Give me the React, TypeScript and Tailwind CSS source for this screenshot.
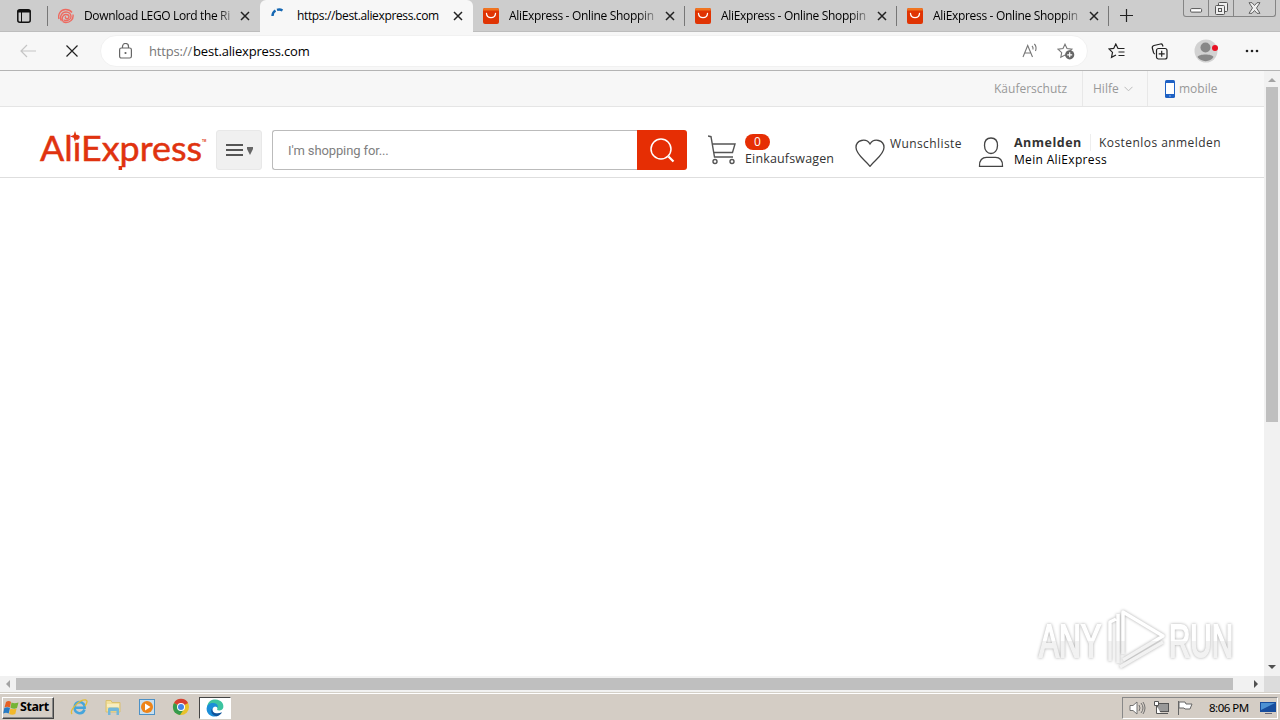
import type { ReactNode } from 'react';

const ui = "font-['Open_Sans','Noto_Sans',sans-serif]";

function Close() {
  return (
    <svg width="10" height="10" viewBox="0 0 10 10" className="shrink-0">
      <path d="M1 1l8 8M9 1l-8 8" stroke="#222" strokeWidth="1.5" />
    </svg>
  );
}

function Bag() {
  return (
    <svg width="16" height="16" viewBox="0 0 16 16" className="shrink-0">
      <rect width="16" height="16" rx="2" fill="#e03404" />
      <path d="M0 2.500V2a2 2 0 012-2h12a2 2 0 012 2v.5z" fill="#f07420" />
      <path d="M3.500 5.500c.5 5.500 8.500 5.500 9 0" fill="none" stroke="#fff" strokeWidth="1.300" strokeLinecap="round" />
    </svg>
  );
}

function Spiral() {
  return (
    <svg width="16" height="16" viewBox="0 0 16 16" className="shrink-0" fill="none" stroke="#ee6a60" strokeWidth="1.4">
      <path d="M1 11C-.5 6 3 1.500 7.500 1.500c3 0 5 1 6.500 3M3 12.500C1.500 8 4 4 8 4c3 0 5 2 5 4.500M4.500 13.500C3.500 9.500 5 6.500 8 6.500c2 0 3 1 3 2.300S9.500 11 8.300 10.500 7 9 8 8.700M15 6.500c.8 5-3 8-7 8-1 0-2-.3-3-.9M13 8.500c0 2.500-2.500 4-5 4-1 0-1.800-.3-2.500-.8" />
    </svg>
  );
}

function AliTab() {
  return (
    <div className="flex h-8 w-[212px] items-center pl-[10px]">
      <Bag />
      <div className="ml-[10px] w-[146px] whitespace-nowrap text-[12px] tracking-[-0.32px] text-black [mask-image:linear-gradient(to_right,black_88%,transparent_105%)]">
        AliExpress - Online Shoppin
      </div>
      <div className="ml-[10px]"><Close /></div>
      <div className="ml-auto h-5 w-px bg-[#777]" />
    </div>
  );
}

function TabStrip() {
  return (
    <div className="flex h-8 items-start border-b border-[#bdbdbd] bg-[#cdcdcd]">
      <div className="flex h-8 w-12 items-center pl-[17px]">
        <svg width="14" height="14" viewBox="0 0 14 14">
          <rect x=".8" y=".8" width="12.400" height="12.400" rx="2" fill="none" stroke="#111" strokeWidth="1.500" />
          <path d="M1 1.500h12v1.500H1zM4.500 3v10" fill="#111" stroke="#111" />
        </svg>
        <div className="ml-auto h-5 w-px bg-[#777]" />
      </div>
      <div className="flex h-8 w-[212px] items-center pl-[10px]">
        <Spiral />
        <div className="ml-[10px] w-[147px] whitespace-nowrap text-[12px] tracking-[-0.36px] text-black [mask-image:linear-gradient(to_right,black_90%,transparent_106%)]">
          Download LEGO Lord the Ri
        </div>
        <div className="ml-[9px]"><Close /></div>
      </div>
      <div className="flex h-8 w-[213px] items-center rounded-t-[6px] bg-[#f7f7f7] pl-[11px]">
        <svg width="16" height="16" viewBox="0 0 16 16" className="shrink-0">
          <path d="M1.500 8a6.500 6.500 0 013-5.400M6 1.900a6.500 6.500 0 015.500.6" fill="none" stroke="#1668b3" strokeWidth="2.400" />
        </svg>
        <div className="ml-[10px] w-[146px] whitespace-nowrap text-[12px] tracking-[-0.36px] text-black">https://best.aliexpress.com</div>
        <div className="ml-[10px]"><Close /></div>
      </div>
      <AliTab />
      <AliTab />
      <AliTab />
      <svg width="15" height="15" viewBox="0 0 15 15" className="ml-[10px] mt-2">
        <path d="M7.500 1v13M1 7.500h13" stroke="#222" strokeWidth="1.200" />
      </svg>
      <div className="ml-auto mr-1 flex h-[17px] w-[93px] rounded-b-[3px] border border-t-0 border-[#858585]">
        <div className="flex w-[25px] justify-center border-r border-[#858585] pt-[8px]">
          <svg width="13" height="5" viewBox="0 0 13 5"><rect x=".6" y=".6" width="11" height="3.500" rx="1" fill="#fff" stroke="#555" /></svg>
        </div>
        <div className="flex w-[25px] justify-center border-r border-[#858585] pt-[2px]">
          <svg width="13" height="13" viewBox="0 0 13 13" fill="#eee" stroke="#555">
            <rect x="3.500" y=".5" width="9" height="9" rx="1" />
            <rect x=".5" y="3.500" width="9" height="9" rx="1" />
            <rect x="3.500" y="6.500" width="3" height="3" />
          </svg>
        </div>
        <div className="flex flex-1 justify-center pt-[2px]">
          <svg width="13" height="12" viewBox="0 0 13 12">
            <path d="M1 .7h3L6.500 3.500 9 .7h3L8.500 6l3.500 5.300H9L6.500 8.500 4 11.300H1L4.500 6z" fill="#eee" stroke="#555" strokeWidth=".9" />
          </svg>
        </div>
      </div>
    </div>
  );
}

function Toolbar() {
  return (
    <div className="flex h-[39px] items-center border-b border-[#b4b4b4] bg-[#f7f7f7]">
      <svg width="16" height="14" viewBox="0 0 16 14" className="ml-5 shrink-0">
        <path d="M16 7H1M7 1L1 7l6 6" fill="none" stroke="#c5c5c5" strokeWidth="1.200" />
      </svg>
      <svg width="12" height="12" viewBox="0 0 12 12" className="ml-[30px] shrink-0">
        <path d="M.5.5l11 11M11.500.5l-11 11" stroke="#222" strokeWidth="1.200" />
      </svg>
      <div className="ml-[22px] flex h-[32px] w-[988px] shrink-0 items-center rounded-full border border-[#f1f1f1] bg-white pl-[18px]">
        <svg width="13" height="16" viewBox="0 0 13 16" fill="none" stroke="#666" strokeWidth="1.200" className="mb-px shrink-0">
          <rect x=".6" y="5" width="11.800" height="10" rx="1.800" />
          <path d="M3.500 5V3.500a3 3 0 016 0V5" />
          <circle cx="6.500" cy="10" r=".5" fill="#666" />
        </svg>
        <div className="ml-[17px] mt-px whitespace-nowrap text-[13px] tracking-[-0.17px] text-black"><span className="mr-px text-[#777]">https://</span>best.aliexpress.com</div>
        <svg width="17" height="16" viewBox="0 0 17 16" fill="none" stroke="#777" strokeWidth="1.100" className="ml-auto shrink-0">
          <path d="M1 14L5.700 2.500 10.500 14M2.700 10h6M10 3c1 1 1.300 2 1 3.500M12.300 1c2 2 2.300 4 1.200 7" />
        </svg>
        <svg width="18" height="17" viewBox="0 0 18 17" className="ml-[18px] mr-[12px] shrink-0">
          <path d="M8 1.200l2 4.300 4.900.6-3.600 3.400.9 4.700L8 12l-4.200 2.300.9-4.700L1 6.100l5-.6z" fill="none" stroke="#777" strokeWidth="1.100" />
          <circle cx="12.700" cy="11.800" r="4.600" fill="#666" />
          <path d="M12.700 9.300v5M10.200 11.800h5" stroke="#fff" strokeWidth="1.200" />
        </svg>
      </div>
      <svg width="18" height="16" viewBox="0 0 18 16" className="ml-[20px] shrink-0" fill="none" stroke="#222" strokeWidth="1.200">
        <path d="M16.500 5.500H10L7.800 1 5.700 5.400 1 6l3.500 3.400-1 5L8 12M10.500 9h6M10.500 12.500h6" />
      </svg>
      <svg width="17" height="17" viewBox="0 0 17 17" className="ml-[25px] shrink-0" fill="none" stroke="#222" strokeWidth="1.200">
        <rect x="5.500" y="5.500" width="10.500" height="10.500" rx="2" fill="#f7f7f7" />
        <path d="M10.700 7.800v6M7.700 10.800h6M12 3.500L11.500 2c-.4-1-1-1.200-2-1L3 2.500C1.500 3 1 3.500 1.300 5l1.200 4.500c.2 1 .7 1.300 1.500 1.500" />
      </svg>
      <svg width="24" height="24" viewBox="0 0 24 24" className="ml-[26px] shrink-0">
        <circle cx="12" cy="12" r="11.500" fill="#d2d2d2" />
        <circle cx="11.500" cy="8.500" r="5" fill="#888" />
        <path d="M3.500 18c1-3.500 15-3.500 16 0-3 5.500-12.500 5.500-16 0z" fill="#888" />
        <circle cx="21" cy="9" r="3" fill="#e81123" />
      </svg>
      <svg width="14" height="4" viewBox="0 0 14 4" className="ml-[27px] shrink-0" fill="#222">
        <circle cx="2" cy="2" r="1.300" /><circle cx="7" cy="2" r="1.300" /><circle cx="12" cy="2" r="1.300" />
      </svg>
    </div>
  );
}

function TopBar() {
  return (
    <div className="flex h-9 items-center border-b border-[#e5e5e5] bg-[#f7f7f7] text-[12px] text-[#999]">
      <div className="ml-[994px] w-[88px] whitespace-nowrap">Käuferschutz</div>
      <div className="flex h-full w-[65px] items-center border-l border-[#e8e8e8] pl-[10px]">
        Hilfe
        <svg width="9" height="6" viewBox="0 0 9 6" className="ml-[5px]"><path d="M.5.800l4 4 4-4" fill="none" stroke="#bbb" /></svg>
      </div>
      <div className="flex h-full items-center border-l border-[#e8e8e8] pl-[17px]">
        <svg width="10" height="18" viewBox="0 0 10 18"><rect width="10" height="18" rx="1.500" fill="#1e61c4" /><rect x="1" y="3" width="8" height="11" fill="#fff" /><path d="M4 16h2" stroke="#8fb4e8" /></svg>
        <span className="ml-[4px]">mobile</span>
      </div>
    </div>
  );
}

function Header() {
  return (
    <div className="flex h-[71px] items-start border-b border-[#dedede] bg-white text-[12px] text-[#333]">
      <svg width="168" height="44" viewBox="0 0 168 44" className="ml-10 mt-[23px] shrink-0 overflow-visible">
        <text x="0" y="31" fontFamily="Lato" fontSize="35" fill="#e0330f" stroke="#e0330f" strokeWidth=".5" textLength="162" lengthAdjust="spacingAndGlyphs">AliExpress</text>
        <path d="M78.600 36v4h3.500v-4z" fill="#e0330f" />
        <path d="M35 1l1.300 4L40 6.500l-3.700 1.300L35 12l-1.300-4.200L30 6.500l3.700-1.500z" fill="#e0330f" />
        <text x="162" y="12" fontFamily="Liberation Sans" fontSize="3" fontWeight="bold" fill="#e0330f">TM</text>
      </svg>
      <div className="ml-[8px] mt-[23px] flex h-10 w-[46px] shrink-0 items-center rounded-[3px] border border-[#e8e8e8] bg-[#f0f0f0] pl-[9px]">
        <div className="flex w-[17px] flex-col gap-[3px]">
          <div className="h-[2px] bg-[#555]" /><div className="h-[2px] bg-[#555]" /><div className="h-[2px] bg-[#555]" />
        </div>
        <svg width="6" height="8" viewBox="0 0 7 8" preserveAspectRatio="none" className="ml-1 mt-px"><path d="M0 0h7v2L3.500 8 0 2z" fill="#666" /></svg>
      </div>
      <div className="ml-[10px] mt-[23px] flex h-10 w-[415px] shrink-0">
        <div className="flex w-[365px] items-center rounded-l-[3px] border border-r-0 border-[#bbb] pt-[2px] pl-[15px] font-['Roboto',sans-serif] text-[13px] tracking-[-0.12px] text-[#808080]">I'm shopping for...</div>
        <div className="flex w-[50px] items-center justify-center rounded-r-[3px] bg-[#e62e04]">
          <svg width="25" height="25" viewBox="0 0 25 25" fill="none" stroke="#fff" strokeWidth="1.500"><circle cx="11" cy="11" r="10" /><path d="M18.500 18.500l5 5" strokeWidth="2.200" /></svg>
        </div>
      </div>
      <svg width="29" height="30" viewBox="0 0 29 30" className="ml-[21px] mt-[28px] shrink-0" fill="none" stroke="#555" strokeWidth="1.400">
        <path d="M0 1l3 .7L6.500 22H25M4.500 9H27l-2.500 8.500H6" /><circle cx="7" cy="26.500" r="2" /><circle cx="24" cy="26.500" r="2" />
      </svg>
      <div className="ml-2 mt-[27px] w-[110px] shrink-0">
        <div className="flex h-4 w-[25px] items-center justify-center rounded-full bg-[#e62e04] text-[12px] text-white">0</div>
        <div className="mt-px whitespace-nowrap text-[12.5px] leading-[16px] tracking-[0.15px]">Einkaufswagen</div>
      </div>
      <svg width="30" height="28" viewBox="0 0 30 28" className="mt-[32px] shrink-0" fill="none" stroke="#444" strokeWidth="1.300">
        <path d="M15 27.300C10 21 1 15.500 1 8.500 1 1 11-1.500 15 5c4-6.500 14-4 14 3.500 0 7-9 12.500-14 18.800z" />
      </svg>
      <div className="ml-[5px] mt-[29px] w-[88px] shrink-0 whitespace-nowrap leading-4 tracking-[0.4px]">Wunschliste</div>
      <svg width="26" height="31" viewBox="0 0 26 31" className="mt-[30px] shrink-0" fill="none" stroke="#444" strokeWidth="1.300">
        <path d="M13 1c5 0 6.500 4 6.500 7.500 0 5-3 8-6.500 8s-6.500-3-6.500-8C6.500 5 8 1 13 1zM1.500 29.300c-.5-6 3-9 7-9h9c4 0 7.500 3 7 9z" />
      </svg>
      <div className="ml-[10px] mt-[27px] shrink-0 whitespace-nowrap leading-[17px]">
        <div className="flex h-[17px]"><b className="w-[75px] text-[12.5px] tracking-[0.5px]">Anmelden</b><span className="ml-px border-l border-[#eee] pl-[8px] tracking-[0.44px]">Kostenlos anmelden</span></div>
        <div className="tracking-[0.33px] text-black">Mein AliExpress</div>
      </div>
    </div>
  );
}

function Watermark() {
  return (
    <svg width="200" height="68" viewBox="0 0 200 68" className="absolute right-[30px] bottom-0 overflow-visible [filter:drop-shadow(0_0_1.5px_#aaa)]">
      <defs>
        <linearGradient id="mark" x1="0" y1="0" x2="0" y2="66" gradientUnits="userSpaceOnUse">
          <stop offset=".5" stopColor="#fff" />
          <stop offset=".5" stopColor="#f2f2f2" />
        </linearGradient>
      </defs>
      <g fill="url(#mark)" fontFamily="Liberation Sans" fontSize="47" stroke="url(#mark)" strokeWidth="2">
        <text x="5" y="49" textLength="62" lengthAdjust="spacingAndGlyphs">ANY</text>
        <text x="135" y="49" textLength="64" lengthAdjust="spacingAndGlyphs">RUN</text>
      </g>
      <path d="M76 53V14l6-3M84 6v49M89 46V4l40 24-40 24M86 59l43-25" fill="none" stroke="url(#mark)" strokeWidth="3.500" strokeLinejoin="round" />
    </svg>
  );
}

function VScroll() {
  return (
    <div className="flex w-4 shrink-0 flex-col items-center bg-[#f1f1f1]">
      <svg width="16" height="16" viewBox="0 0 16 16" className="shrink-0"><path d="M4 11l4-4 4 4z" fill="#a3a3a3" /></svg>
      <div className="h-[335px] w-3 bg-[#bfbfbf]" />
      <svg width="16" height="16" viewBox="0 0 16 16" className="mt-auto shrink-0"><path d="M4 5h8l-4 4z" fill="#505050" /></svg>
    </div>
  );
}

function TaskIcon({ children }: { children: ReactNode }) {
  return <svg width="18" height="18" viewBox="0 0 18 18" className="ml-4 shrink-0">{children}</svg>;
}

function EdgeIcon() {
  return (
    <svg width="18" height="18" viewBox="0 0 18 18">
      <path d="M1 8C2 2 6 .5 9.500.6c6 .4 8.500 4.400 7.800 7.900-.5 2.800-4 3.500-6.300 2.500 1-1.500 0-4-3-4-3 0-5 2-7 1z" fill="#3cc4a0" />
      <path d="M.6 9.500C1 5 5 3.500 8 4c3 .4 4.500 2.500 3.500 4.500C10 6.500 7 7.500 6.500 10c-.5 4 3.500 6.500 6 6.500C7 19.500.5 15.500.6 9.500z" fill="#1b8ed8" />
      <path d="M6.500 9c-1.500 4 3.500 7 9.500 4.200-1 2-3 3.500-5 4C6 17 3.500 12 6.500 9z" fill="#11559c" />
    </svg>
  );
}

function Taskbar() {
  return (
    <div className="flex h-[28px] items-center border-t border-[#d4d0c8] bg-[#d4cdc5] shadow-[inset_0_1px_0_#fff]">
      <div className="ml-[2px] mt-[2px] flex h-[22px] w-[52px] items-center border border-t-white border-r-[#444] border-b-[#444] border-l-white font-['Noto_Sans',sans-serif] text-[12.5px] font-bold tracking-[-0.4px] text-black shadow-[inset_-1px_-1px_0_#888]">
        <svg width="17" height="16" viewBox="0 0 17 16" className="shrink-0">
          <path d="M3 2c2-1.500 4-1 5 .1L7 7.500c-2-1.200-4-1-5.500 0z" fill="#e66024" />
          <path d="M8.500 2.500c2 1 4 1 7 0L14 8c-2 1-4 .8-6.500-.2z" fill="#74b436" />
          <path d="M1.300 8c2-1 4-1 5.700 0l-1.300 5.500c-2-1-3.500-1-5.500 0z" fill="#287bc4" />
          <path d="M7.400 8.500c2 1 4 1 6.200 0l-1.300 5.500c-2 1-4 1-6.200 0z" fill="#f2b82b" />
        </svg>
        Start
      </div>
      <TaskIcon>
        <path d="M14.500 11.500c-1 3-3.500 4-6 3.500-5.500-1.500-5-10 .5-11 4 0 6 3 5.700 5.700H5" fill="none" stroke="#45a5dc" strokeWidth="2.500" />
        <path d="M2 16C-1 12 10 1 16 2c2 .6.500 4-1 6" fill="none" stroke="#e3bd36" strokeWidth="1.300" />
      </TaskIcon>
      <TaskIcon>
        <path d="M2 2.500h5l1 2h8V14H2z" fill="#f3e09a" stroke="#d9c070" />
        <path d="M3 6h12v3H3z" fill="#f8edc0" />
        <path d="M4 17v-6q0-1.500 1.500-1.500h8q1.500 0 1.500 1.500v6h-2.500v-4h-6v4z" fill="#72b7da" />
      </TaskIcon>
      <TaskIcon>
        <rect x="1.500" y="1.500" width="15" height="15" fill="#c8dfef" stroke="#4d91c6" />
        <circle cx="9" cy="9" r="6" fill="#ee8418" />
        <path d="M7 5.500l5.500 3.500L7 12.500z" fill="#fff" />
      </TaskIcon>
      <TaskIcon>
        <circle cx="9" cy="9" r="8" fill="#e8c22c" />
        <path d="M9 9L2 5a8 8 0 0114 0z" fill="#d73f32" />
        <path d="M9 9L2 5a8 8 0 006 12l4-6z" fill="#359b4d" />
        <circle cx="9" cy="9" r="4" fill="#fff" /><circle cx="9" cy="9" r="3" fill="#4385e8" />
      </TaskIcon>
      <div className="ml-[9px] mt-[2px] flex h-[22px] w-8 items-center justify-center border border-t-[#444] border-r-white border-b-white border-l-[#444] bg-white"><EdgeIcon /></div>
      <div className="ml-auto mr-[2px] mt-[2px] flex h-[22px] w-[156px] items-center border border-t-[#888] border-r-white border-b-white border-l-[#888] pl-[6px]">
        <svg width="17" height="16" viewBox="0 0 17 16" className="shrink-0" fill="#fff" stroke="#666" strokeWidth=".9">
          <path d="M1 5.500h3L8 2v12l-4-3.500H1z" /><path d="M10 5q2 3 0 6M12 3q4 5 0 10M14 2q4 6 0 12" fill="none" />
        </svg>
        <svg width="17" height="16" viewBox="0 0 17 16" className="ml-[7px] shrink-0" fill="#fff" stroke="#555">
          <rect x="4.500" y="3.500" width="11" height="8" fill="#999" /><path d="M7 13.500h8M1.500 1.500v4h4v-4zM3.500 5.500v8H8" />
        </svg>
        <svg width="17" height="16" viewBox="0 0 17 16" className="ml-[7px] shrink-0" fill="#fff" stroke="#666">
          <path d="M1.500 15V1M2 2h6l1 2h6l-2 5H8L7 8H2z" />
        </svg>
        <span className="ml-[15px] whitespace-nowrap font-['Noto_Sans',sans-serif] text-[11.5px] tracking-[-0.5px] text-black">8:06 PM</span>
        <svg width="16" height="14" viewBox="0 0 16 14" className="mr-px ml-auto shrink-0"><path d="M0 1h16v10H0z" fill="#174d9d" /><path d="M1 2h14L1 9z" fill="#4c91d3" /><path d="M5 12h7v1H5z" fill="#667" /></svg>
      </div>
    </div>
  );
}

export default function App() {
  return (
    <div className={`flex h-[720px] w-[1280px] flex-col overflow-hidden bg-white ${ui}`}>
      <TabStrip />
      <Toolbar />
      <div className="flex h-[605px]">
        <div className="relative w-[1264px]">
          <TopBar />
          <Header />
          <Watermark />
        </div>
        <VScroll />
      </div>
      <div className="flex h-4 items-center bg-[#f1f1f1]">
        <svg width="16" height="16" viewBox="0 0 16 16"><path d="M10 4v8L6 8z" fill="#a3a3a3" /></svg>
        <div className="h-3 w-[1217px] bg-[#bfbfbf]" />
        <svg width="16" height="16" viewBox="0 0 16 16" className="ml-[15px]"><path d="M6 4l4 4-4 4z" fill="#505050" /></svg>
        <div className="ml-auto h-4 w-4 bg-[#dcdcdc]" />
      </div>
      <Taskbar />
    </div>
  );
}
